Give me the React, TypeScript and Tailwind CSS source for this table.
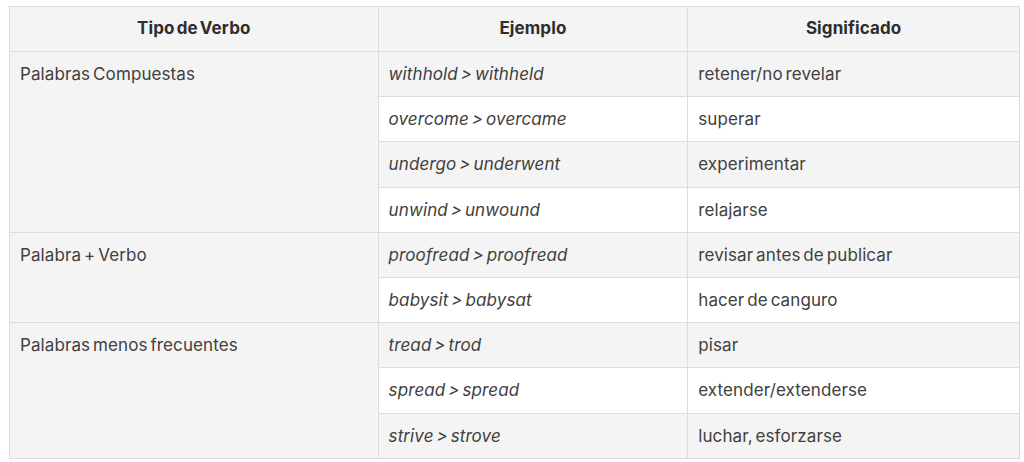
import React from "react";

type Group = { tipo: string; rows: [string, string][] };

const groups: Group[] = [
  {
    tipo: "Palabras Compuestas",
    rows: [
      ["withhold > withheld", "retener/no revelar"],
      ["overcome > overcame", "superar"],
      ["undergo > underwent", "experimentar"],
      ["unwind > unwound", "relajarse"],
    ],
  },
  {
    tipo: "Palabra + Verbo",
    rows: [
      ["proofread > proofread", "revisar antes de publicar"],
      ["babysit > babysat", "hacer de canguro"],
    ],
  },
  {
    tipo: "Palabras menos frecuentes",
    rows: [
      ["tread > trod", "pisar"],
      ["spread > spread", "extender/extenderse"],
      ["strive > strove", "luchar, esforzarse"],
    ],
  },
];

export default function App() {
  let idx = 0;
  return (
    <div
      className="w-[1024px] h-[462px] bg-white pt-[6px] pl-[9px]"
      style={{ fontFamily: "Inter, 'Noto Sans', sans-serif" }}
    >
      <table className="w-[1011px] border-collapse border border-[#dcdcdc] text-[17px] text-[#404040] tracking-[0.1px] [word-spacing:-2px]">
        <colgroup>
          <col className="w-[369px]" />
          <col className="w-[310px]" />
          <col className="w-[332px]" />
        </colgroup>
        <thead>
          <tr className="bg-[#f4f4f4] h-[45px]">
            <th className="border border-[#dcdcdc] font-bold text-[#2e2e2e] text-center align-middle">Tipo de Verbo</th>
            <th className="border border-[#dcdcdc] font-bold text-[#2e2e2e] text-center align-middle">Ejemplo</th>
            <th className="border border-[#dcdcdc] font-bold text-[#2e2e2e] text-center align-middle">Significado</th>
          </tr>
        </thead>
        <tbody>
          {groups.map((g) =>
            g.rows.map((r, i) => {
              const gray = idx % 2 === 0;
              idx++;
              return (
                <tr key={r[0]} className={gray ? "bg-[#f4f4f4] h-[45.2px]" : "bg-white h-[45.2px]"}>
                  {i === 0 && (
                    <td
                      rowSpan={g.rows.length}
                      className="border border-[#dcdcdc] bg-[#f4f4f4] align-top px-[10px] pt-[11px] leading-[22px]"
                    >
                      {g.tipo}
                    </td>
                  )}
                  <td className="border border-[#dcdcdc] px-[10px] py-0 italic leading-[22px] align-middle">{r[0]}</td>
                  <td className="border border-[#dcdcdc] px-[10px] py-0 leading-[22px] align-middle">{r[1]}</td>
                </tr>
              );
            })
          )}
        </tbody>
      </table>
    </div>
  );
}
